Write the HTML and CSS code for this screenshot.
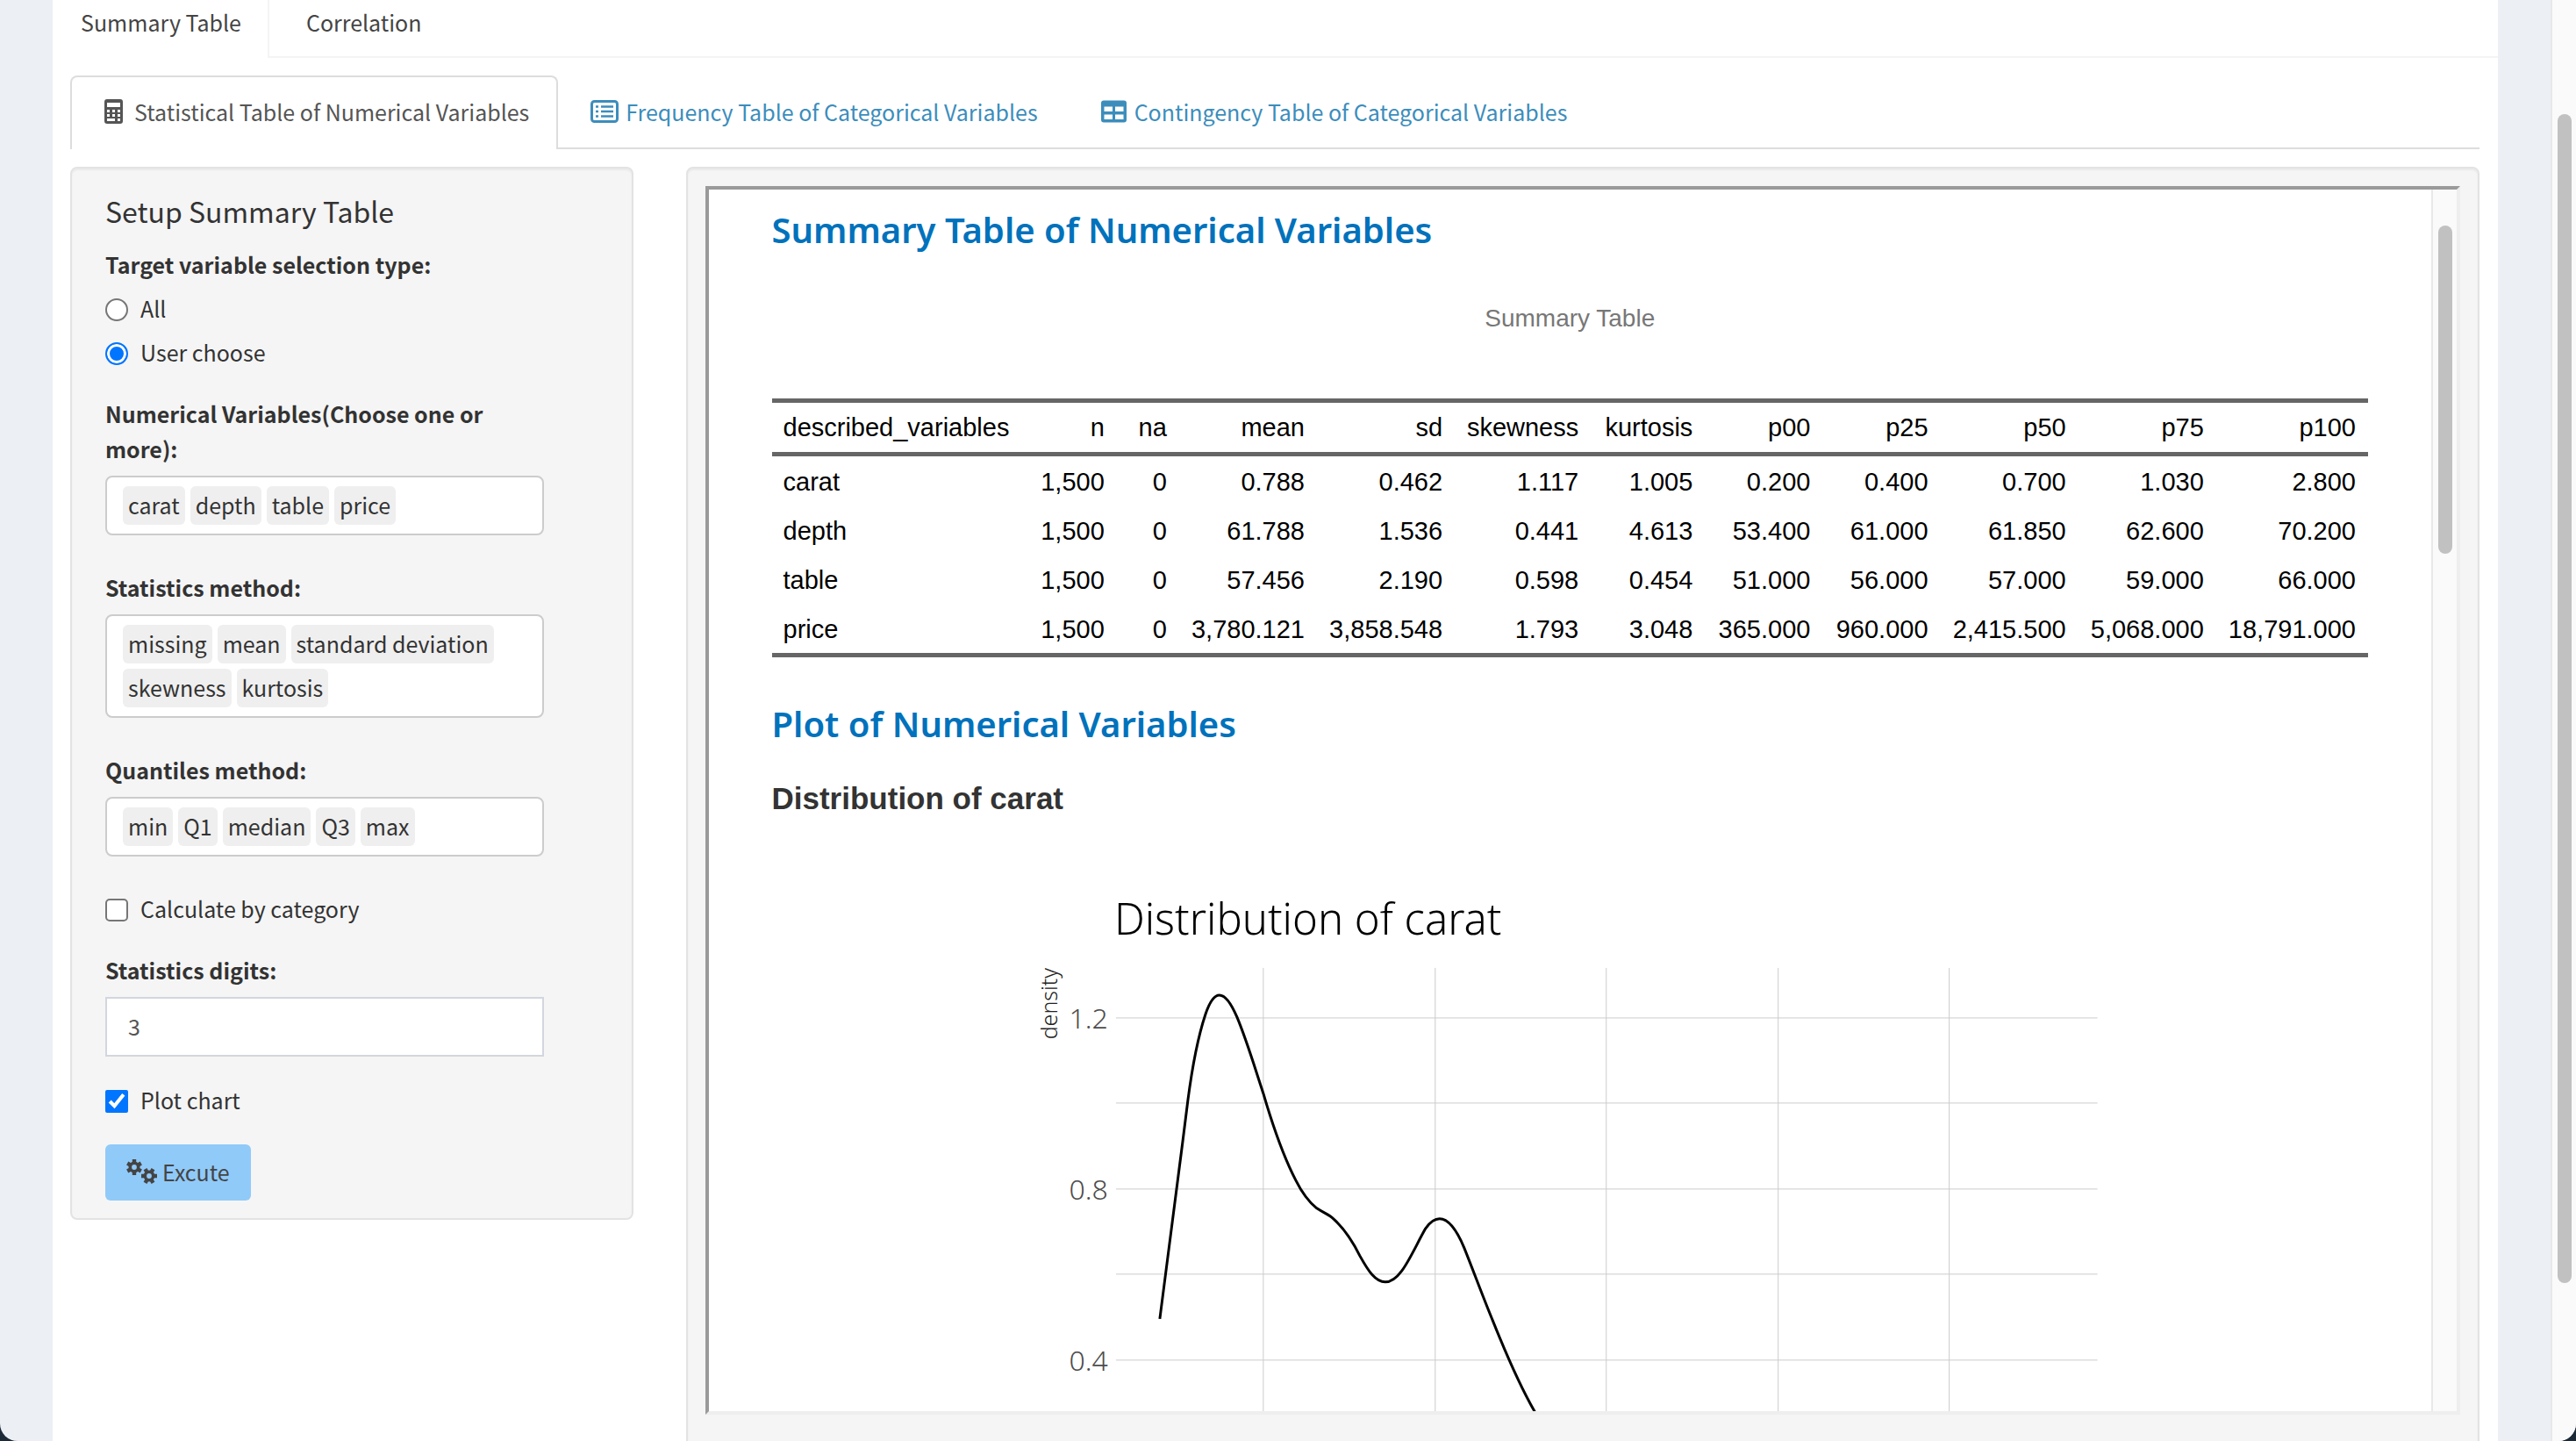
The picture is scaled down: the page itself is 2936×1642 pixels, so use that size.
FILE: index.html
```html
<!DOCTYPE html>
<html lang="en">
<head>
<meta charset="utf-8">
<title>Summary Table</title>
<link rel="stylesheet" href="styles.css">
</head>
<body>
<div class="window">
  <main class="box">
    <nav class="main-tabs">
      <a class="main-tab main-tab-active" href="#summary">Summary Table</a>
      <a class="main-tab" href="#correlation">Correlation</a>
    </nav>
    <div class="box-body">
      <nav class="sub-tabs">
        <a class="sub-tab sub-tab-active" href="#statistical">
          <svg class="icon" viewBox="0 0 35 30" aria-hidden="true"><path fill="currentColor" fill-rule="evenodd" d="M10 1h15a3 3 0 0 1 3 3v22a3 3 0 0 1-3 3H10a3 3 0 0 1-3-3V4a3 3 0 0 1 3-3zM10 5v5h15V5zM10 13v3h3v-3zM16 13v3h3v-3zM22 13v3h3v-3zM10 18v3h3v-3zM16 18v3h3v-3zM22 18v3h3v-3zM10 23v3h9v-3zM22 23v3h3v-3z"/></svg>
          Statistical Table of Numerical Variables</a>
        <a class="sub-tab" href="#frequency">
          <svg class="icon" viewBox="0 0 35 30" aria-hidden="true"><rect x="2.5" y="3.500" width="29" height="23" rx="3" fill="none" stroke="currentColor" stroke-width="3"/><path stroke="currentColor" stroke-width="2.500" d="M7 9.500h3M7 15h3M7 20.500h3M13 9.500h14M13 15h14M13 20.500h14"/></svg>
          Frequency Table of Categorical Variables</a>
        <a class="sub-tab" href="#contingency">
          <svg class="icon" viewBox="0 0 35 30" aria-hidden="true"><path fill="currentColor" fill-rule="evenodd" d="M6 2.500h23a3 3 0 0 1 3 3v19a3 3 0 0 1-3 3H6a3 3 0 0 1-3-3v-19a3 3 0 0 1 3-3zM6.500 9.500v5.500H16V9.500zM19 9.500v5.500h9.500V9.500zM6.500 18.500V24H16v-5.500zM19 18.500V24h9.500v-5.500z"/></svg>
          Contingency Table of Categorical Variables</a>
      </nav>
      <div class="columns">
        <form class="well setup">
          <h4 class="setup-title">Setup Summary Table</h4>
          <fieldset class="group">
            <legend class="label">Target variable selection type:</legend>
            <label class="tick"><input type="radio" name="target"> All</label>
            <label class="tick"><input type="radio" name="target" checked> User choose</label>
          </fieldset>
          <div class="field">
            <label class="label" for="variables">Numerical Variables(Choose one or more):</label>
            <div class="tags"><span class="tag">carat</span><span class="tag">depth</span><span class="tag">table</span><span class="tag">price</span><input class="tags-input" id="variables" type="text"></div>
          </div>
          <div class="field">
            <label class="label" for="statistics">Statistics method:</label>
            <div class="tags"><span class="tag">missing</span><span class="tag">mean</span><span class="tag">standard deviation</span><span class="tag">skewness</span><span class="tag">kurtosis</span><input class="tags-input" id="statistics" type="text"></div>
          </div>
          <div class="field">
            <label class="label" for="quantiles">Quantiles method:</label>
            <div class="tags"><span class="tag">min</span><span class="tag">Q1</span><span class="tag">median</span><span class="tag">Q3</span><span class="tag">max</span><input class="tags-input" id="quantiles" type="text"></div>
          </div>
          <label class="tick category"><input type="checkbox"> Calculate by category</label>
          <div class="digits">
            <label class="label" for="digits">Statistics digits:</label>
            <input class="text-input" id="digits" type="text" value="3">
          </div>
          <label class="tick"><input type="checkbox" checked> Plot chart</label>
          <button class="execute" type="button">
            <svg class="icon" viewBox="0 0 35 28" aria-hidden="true"><g fill="none" stroke="currentColor"><circle cx="9" cy="9" r="4.700" stroke-width="3.600"/><circle cx="26" cy="19" r="4.700" stroke-width="3.600"/><path stroke-width="4.400" d="M9 0v4M9 14v4M1.200 4.500l3.500 2M13.300 11.500l3.500 2M1.200 13.500l3.500-2M13.300 6.500l3.500-2M17 19h4M31 19h4M21.500 11.200l2 3.500M28.500 23.300l2 3.500M30.500 11.200l-2 3.500M23.500 23.300l-2 3.500"/></g></svg>
            Excute</button>
        </form>
        <section class="well result">
          <div class="frame">
            <article class="report">
              <h1 class="report-title">Summary Table of Numerical Variables</h1>
              <table class="stats">
                <caption>Summary Table</caption>
                <colgroup>
                  <col class="c-name"><col class="c-n"><col class="c-na"><col class="c-wide"><col class="c-wide"><col class="c-skew"><col class="c-kurt"><col class="c-mid"><col class="c-mid"><col class="c-wide"><col class="c-wide"><col class="c-max">
                </colgroup>
                <thead>
                  <tr><th>described_variables</th><th>n</th><th>na</th><th>mean</th><th>sd</th><th>skewness</th><th>kurtosis</th><th>p00</th><th>p25</th><th>p50</th><th>p75</th><th>p100</th></tr>
                </thead>
                <tbody>
                  <tr><td>carat</td><td>1,500</td><td>0</td><td>0.788</td><td>0.462</td><td>1.117</td><td>1.005</td><td>0.200</td><td>0.400</td><td>0.700</td><td>1.030</td><td>2.800</td></tr>
                  <tr><td>depth</td><td>1,500</td><td>0</td><td>61.788</td><td>1.536</td><td>0.441</td><td>4.613</td><td>53.400</td><td>61.000</td><td>61.850</td><td>62.600</td><td>70.200</td></tr>
                  <tr><td>table</td><td>1,500</td><td>0</td><td>57.456</td><td>2.190</td><td>0.598</td><td>0.454</td><td>51.000</td><td>56.000</td><td>57.000</td><td>59.000</td><td>66.000</td></tr>
                  <tr><td>price</td><td>1,500</td><td>0</td><td>3,780.121</td><td>3,858.548</td><td>1.793</td><td>3.048</td><td>365.000</td><td>960.000</td><td>2,415.500</td><td>5,068.000</td><td>18,791.000</td></tr>
                </tbody>
              </table>
              <h1 class="report-title">Plot of Numerical Variables</h1>
              <h2 class="report-subtitle">Distribution of carat</h2>
              <svg class="chart" viewBox="0 0 1820 709" role="img" aria-label="Distribution of carat">
                <g transform="translate(-880 -932)">
                  <g class="grid">
                    <path d="M1272 1160H2391M1272 1257H2391M1272 1355H2391M1272 1452H2391M1272 1550H2391"/>
                    <path d="M1440 1103V1640M1636 1103V1640M1831 1103V1640M2027 1103V1640M2222 1103V1640"/>
                  </g>
                  <text class="chart-title" x="1270" y="1065">Distribution of carat</text>
                  <text class="axis-title" transform="translate(1205 1103) rotate(-90)" text-anchor="end">density</text>
                  <text class="tick-label" x="1263" y="1172">1.2</text>
                  <text class="tick-label" x="1263" y="1367">0.8</text>
                  <text class="tick-label" x="1263" y="1562">0.4</text>
                  <path class="curve" d="M1322 1503C1331 1436 1343 1342 1354 1254C1360 1208 1366 1180 1374 1156C1379 1141 1384 1134 1390 1134C1397 1134 1404 1145 1410 1159C1422 1188 1430 1216 1440 1246C1452 1287 1463 1318 1477 1345C1483 1357 1491 1369 1501 1377C1510 1383 1515 1384 1520 1389C1532 1400 1541 1413 1550 1431C1560 1449 1568 1461 1579 1461C1597 1461 1609 1428 1625 1400C1630 1393 1635 1389 1641 1389C1652 1389 1661 1403 1669 1422C1681 1452 1690 1477 1702 1506C1718 1546 1733 1580 1749 1608L1765 1640"/>
                </g>
              </svg>
            </article>
            <div class="scrollbar"><div class="thumb thumb-frame"></div></div>
          </div>
        </section>
      </div>
    </div>
  </main>
  <div class="scrollbar"><div class="thumb thumb-page"></div></div>
</div>
</body>
</html>
```

FILE: styles.css
```css
* { box-sizing: border-box; }

body {
  margin: 0;
  background: #1c2a38;
  color: #333;
  font: 25px/40px "Noto Sans CJK KR", sans-serif;
}

h1, h2, h4, fieldset, legend { margin: 0; padding: 0; border: 0; }
input, button { font: inherit; }
a { color: #3c8dbc; text-decoration: none; }

.window {
  display: flex;
  height: 100vh;
  overflow: hidden;
  padding-left: 60px;
  border-radius: 0 0 20px 20px;
  background: #ecf0f5;
}

.box { flex: 1; min-width: 0; margin-right: 60px; background: #fff; }

.scrollbar {
  flex: none;
  width: 29px;
  border-left: 2px solid #e8e8e8;
  background: #fafafa;
}
.thumb { width: 16px; margin-left: 6px; border-radius: 8px; background: #c1c1c1; }
.thumb-page { height: 1332px; margin-top: 130px; }
.thumb-frame { height: 374px; margin-top: 41px; }

.main-tabs { display: flex; border-bottom: 2px solid #f4f4f4; }
.main-tab { padding: 5px 30px 19px 42px; color: #444; }
.main-tab-active {
  margin-bottom: -2px;
  padding-left: 32px;
  border-right: 2px solid #f4f4f4;
  background: #fff;
}

.box-body { padding: 20px 21px 0 20px; }

.sub-tabs { display: flex; gap: 4px; border-bottom: 2px solid #ddd; }
.sub-tab {
  display: flex;
  align-items: center;
  gap: 6px;
  margin-bottom: -2px;
  padding: 19px 31px 23px 30px;
  border: 2px solid transparent;
  border-bottom: 0;
  border-radius: 8px 8px 0 0;
}
.sub-tab-active { border-color: #ddd; background: #fff; color: #555; }
.icon { flex: none; width: 35px; height: 30px; }

.columns {
  display: grid;
  grid-template-columns: repeat(4, minmax(0, 1fr));
  gap: 60px;
  align-items: start;
  padding-top: 20px;
}

.well {
  border: 2px solid #e3e3e3;
  border-radius: 8px;
  background: #f5f5f5;
  box-shadow: inset 0 2px 2px rgba(0, 0, 0, .05);
}

.setup { padding: 28px 100px 20px 38px; }
.setup-title { margin-bottom: 21px; font-size: 32px; font-weight: 400; line-height: 40px; }
.label { display: block; font-weight: 700; }
.tick { display: flex; gap: 14px; }
.group .tick { margin-top: 10px; }
.group { margin-bottom: 30px; }
.tick input { flex: none; width: 26px; height: 26px; margin: 9px 0 0; accent-color: #0075ff; }
.tick input[type="radio"],
.tick input:not(:checked) {
  appearance: none;
  border: 2px solid #767676;
  border-radius: 5px;
  background: #fff;
}
.tick input[type="radio"] { border-radius: 50%; }
.tick input[type="radio"]:checked {
  border-color: #0075ff;
  background: #0075ff;
  box-shadow: inset 0 0 0 3px #fff;
}
.field { margin-bottom: 39px; }
.category { margin-bottom: 30px; }
.digits { margin-bottom: 29px; }

.tags {
  display: flex;
  flex-wrap: wrap;
  gap: 6px;
  margin-top: 11px;
  padding: 10px 18px;
  border: 2px solid #ccc;
  border-radius: 8px;
  background: #fff;
}
.tag { padding: 0 6px 2px; border-radius: 6px; background: #efefef; line-height: 42px; }
.tags-input { flex: 1 1 8px; width: 8px; height: 44px; padding: 0; border: 0; outline: 0; background: none; }
.text-input {
  display: block;
  width: 100%;
  height: 68px;
  margin-top: 11px;
  padding: 0 24px 2px;
  border: 2px solid #d2d6de;
  color: #555;
}
.execute {
  display: flex;
  align-items: center;
  gap: 6px;
  height: 64px;
  margin-top: 31px;
  padding: 0 24px 2px;
  border: 0;
  border-radius: 6px;
  background: #90caf9;
  color: #444;
}

.result { grid-column: span 3; padding: 20px 20px 60px; }
.frame {
  display: flex;
  height: 1400px;
  overflow: hidden;
  border: 4px solid;
  border-color: #9a9a9a #eee #eee #9a9a9a;
  background: #fff;
}
.report { flex: 1; min-width: 0; padding: 20px 72px 0; }
.report-title {
  color: #0072bc;
  font: 600 40px/52px "Noto Sans", sans-serif;
}
.report-subtitle {
  margin-top: 37px;
  font: 700 35px/44px "Liberation Sans", sans-serif;
}

.stats {
  width: 100%;
  margin: 55px 0 50px;
  border-spacing: 0;
  table-layout: fixed;
  color: #000;
  font: 29px/34px "Liberation Sans", sans-serif;
}
.stats caption { padding-bottom: 71px; color: #777; font-size: 28px; line-height: 40px; }
.stats th, .stats td { padding: 12px 14px 10px 0; font-weight: 400; text-align: right; }
.stats th { padding: 11px 14px 11px 0; border: solid #666; border-width: 5px 0; }
.stats th:first-child, .stats td:first-child { padding-left: 13px; text-align: left; }
.stats tr:last-child td { border-bottom: 5px solid #666; }
.c-name { width: 295px; }
.c-n { width: 98px; }
.c-na { width: 71px; }
.c-wide { width: 157px; }
.c-skew { width: 155px; }
.c-kurt { width: 130px; }
.c-mid { width: 134px; }
.c-max { width: 173px; }

.chart { display: block; width: 100%; }
.grid { fill: none; stroke: #ccc; stroke-width: 1; }
.curve { fill: none; stroke: #000; stroke-width: 3; }
.chart-title { fill: #000; font: 300 49px "Noto Sans", sans-serif; }
.axis-title { fill: #222; font: 300 25px "Noto Sans", sans-serif; }
.tick-label { fill: #4d4d4d; font: 300 32px "Noto Sans", sans-serif; text-anchor: end; }
```
